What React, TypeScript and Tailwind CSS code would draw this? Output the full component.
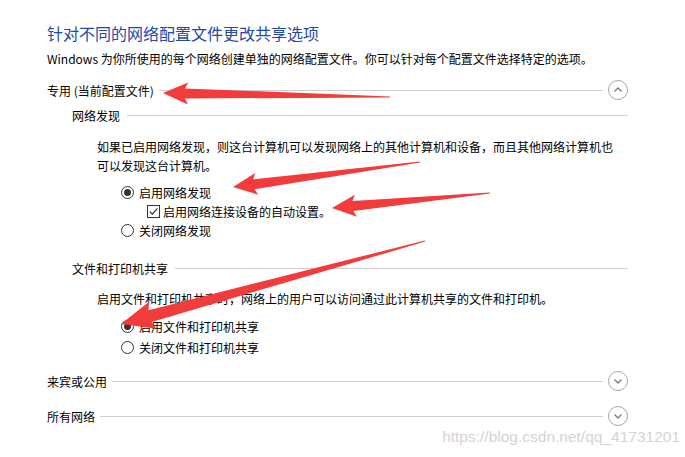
import React from "react";

type Pt = [number, number];

// Red annotation arrows drawn over the screenshot: tip, tail, head length, head half-width, shaft half-width
const arrows: { tip: Pt; tail: Pt; head: number; wing: number; shaft: number }[] = [
  { tip: [163, 93], tail: [390, 97], head: 22, wing: 11, shaft: 5 },
  { tip: [233, 187], tail: [420, 162], head: 21, wing: 11, shaft: 5 },
  { tip: [332, 208], tail: [490, 193], head: 21, wing: 11, shaft: 5 },
  { tip: [121, 324], tail: [425, 241], head: 30, wing: 14, shaft: 6 },
];

function arrowPoints(a: (typeof arrows)[number]) {
  const [tx, ty] = a.tip;
  const [sx, sy] = a.tail;
  const len = Math.hypot(sx - tx, sy - ty);
  const dx = (sx - tx) / len;
  const dy = (sy - ty) / len;
  const nx = -dy;
  const ny = dx;
  const at = (d: number, n: number): string =>
    `${(tx + dx * d + nx * n).toFixed(1)},${(ty + dy * d + ny * n).toFixed(1)}`;
  return [
    at(0, 0),
    at(a.head + 3, a.wing),
    at(a.head, a.shaft),
    at(len, 0.6),
    at(len, -0.6),
    at(a.head, -a.shaft),
    at(a.head + 3, -a.wing),
  ].join(" ");
}

function Chevron({ up }: { up?: boolean }) {
  return (
    <span className="flex h-[20px] w-[20px] shrink-0 items-center justify-center rounded-full border border-[#a6a6a6]">
      <svg width="10" height="10" viewBox="0 0 10 10" fill="none">
        <path
          d={up ? "M1.5 6.5 L5 3 L8.5 6.5" : "M1.5 3.5 L5 7 L8.5 3.5"}
          stroke="#7a7a7a"
          strokeWidth="1.3"
        />
      </svg>
    </span>
  );
}

function Section({ label, up, className = "" }: { label: string; up?: boolean; className?: string }) {
  return (
    <div className={`flex h-[20px] items-center ${className}`}>
      <span className="whitespace-nowrap">{label}</span>
      <div className="mx-[5px] h-px flex-1 bg-[#cfcfcf]" />
      <Chevron up={up} />
    </div>
  );
}

function Sub({ label, className = "" }: { label: string; className?: string }) {
  return (
    <div className={`flex h-[20px] items-center pl-[25px] ${className}`}>
      <span className="whitespace-nowrap">{label}</span>
      <div className="ml-[7px] h-px flex-1 bg-[#cfcfcf]" />
    </div>
  );
}

function Radio({ label, checked, className = "" }: { label: string; checked?: boolean; className?: string }) {
  return (
    <div className={`flex h-[19px] items-center pl-[74px] ${className}`}>
      <span className="flex h-[13px] w-[13px] items-center justify-center rounded-full border border-[#333]">
        {checked && <span className="h-[7px] w-[7px] rounded-full bg-[#333]" />}
      </span>
      <span className="ml-[5px]">{label}</span>
    </div>
  );
}

export default function App() {
  return (
    <div
      className="relative h-[457px] w-[685px] overflow-hidden bg-white text-[12px] leading-[19px] text-black"
      style={{ fontFamily: '"Noto Sans CJK SC", "Noto Sans", sans-serif' }}
    >
      <div className="ml-[47px] flex w-[581px] flex-col pt-[22px]">
        <h1 className="text-[16px] font-normal leading-[22px] text-[#2448a8]">
          针对不同的网络配置文件更改共享选项
        </h1>
        <p className="mt-[5px] whitespace-nowrap">
          Windows 为你所使用的每个网络创建单独的网络配置文件。你可以针对每个配置文件选择特定的选项。
        </p>

        <Section label="专用 (当前配置文件)" up className="mt-[12px]" />
        <Sub label="网络发现" className="mt-[5px]" />
        <div className="mt-[12px] pl-[50px]">
          <p className="whitespace-nowrap">
            如果已启用网络发现，则这台计算机可以发现网络上的其他计算机和设备，而且其他网络计算机也
          </p>
          <p className="whitespace-nowrap">可以发现这台计算机。</p>
        </div>
        <Radio label="启用网络发现" checked className="mt-[8px]" />
        <div className="flex h-[19px] items-center pl-[100px]">
          <span className="flex h-[13px] w-[13px] items-center justify-center border border-[#333]">
            <svg width="11" height="11" viewBox="0 0 11 11" fill="none">
              <path d="M1.8 5.6 L4.3 8.2 L9.4 2.4" stroke="#222" strokeWidth="1.1" />
            </svg>
          </span>
          <span className="ml-[3px]">启用网络连接设备的自动设置。</span>
        </div>
        <Radio label="关闭网络发现" />

        <Sub label="文件和打印机共享" className="mt-[18px]" />
        <p className="mt-[11px] whitespace-nowrap pl-[50px]">
          启用文件和打印机共享时，网络上的用户可以访问通过此计算机共享的文件和打印机。
        </p>
        <Radio label="启用文件和打印机共享" checked className="mt-[9px]" />
        <Radio label="关闭文件和打印机共享" className="mt-[2px]" />

        <Section label="来宾或公用" className="mt-[14px]" />
        <Section label="所有网络" className="mt-[15px]" />
      </div>

      {/* watermark */}
      <span
        className="absolute right-[5px] top-[427px] text-[15.5px] leading-[20px] text-[#d4d4d4]"
        style={{ fontFamily: '"Liberation Sans", Arial, sans-serif' }}
      >
        https://blog.csdn.net/qq_41731201
      </span>

      {/* annotation arrows */}
      <svg className="pointer-events-none absolute inset-0" width="685" height="457">
        {arrows.map((a, i) => (
          <polygon key={i} points={arrowPoints(a)} fill="#f23c3c" />
        ))}
      </svg>
    </div>
  );
}
